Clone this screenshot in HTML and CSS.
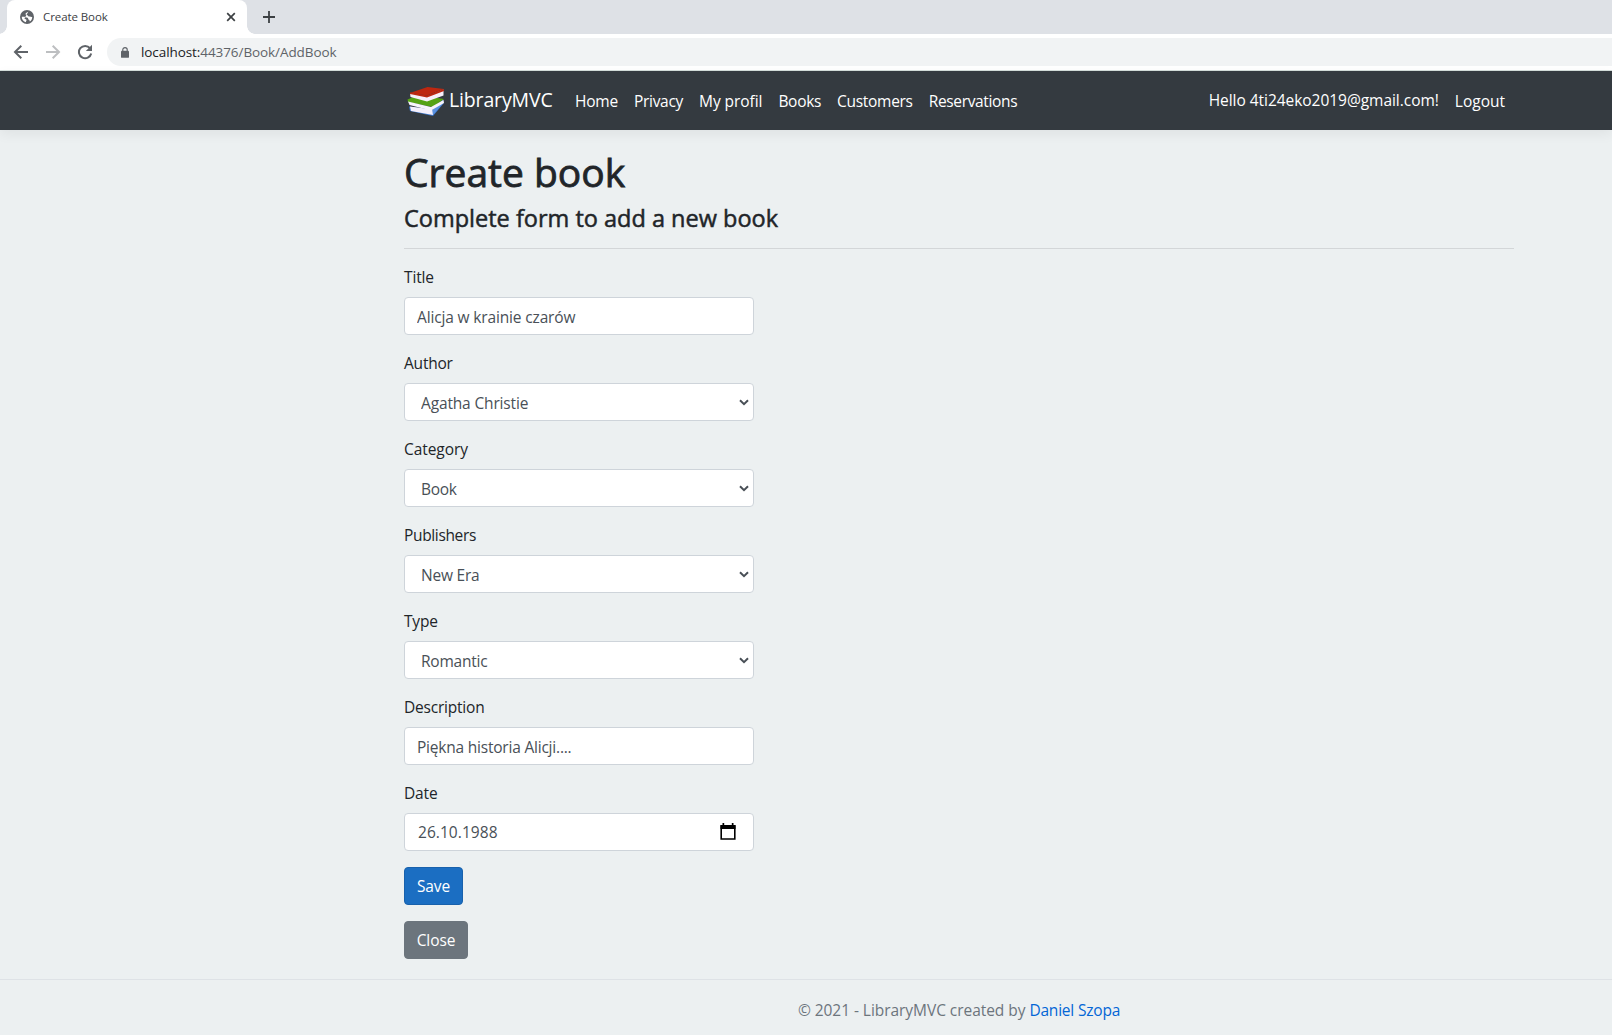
FILE: index.html
```html
<!DOCTYPE html>
<html lang="en">
<head>
<meta charset="utf-8">
<title>Create Book</title>
<link rel="stylesheet" href="styles.css">
</head>
<body>
<header class="browser">
  <div class="tabstrip">
    <div class="tab">
      <svg viewBox="0 0 16 16" width="14" height="14"><circle cx="8" cy="8" r="8" fill="#5f6368"/><path d="M9.500 2C8 3 6.500 3 6.300 4.500c0 1.200 1.200 1.300 2.200 1.300.3 1.400 1.500 1.700 2.700 1.700 1 0 1.500.7 2.800.4-.1 2.300-1.100 4.100-2.700 5.200-.6-.6-.2-1.500-1-1.900-1-.4-1.200-1.200-1-2.200C7.500 8.500 6 8 4.800 7.800 3.800 7.700 3 7.500 2 7.600c-.1 3.200 2 5.600 4.800 6.300.3-.7-.1-1.200.6-1.900.4-.6-.3-1.200-1-1.500l-1.400-.7" fill="#fff"/></svg>
      <span class="tab-title">Create Book</span>
      <svg viewBox="0 0 10 10" width="10" height="10"><path d="M1.200 1.200l7.600 7.600M8.800 1.200L1.200 8.800" stroke="#3c4043" stroke-width="1.700"/></svg>
    </div>
    <svg class="plus" viewBox="0 0 12 12" width="12" height="12"><path d="M6 0v12M0 6h12" stroke="#3c4043" stroke-width="1.800"/></svg>
  </div>
  <div class="toolbar">
    <svg class="nav-icon" viewBox="0 0 16 16" width="16" height="16"><path d="M15 8H2.500M8.300 1.800L2 8l6.300 6.200" fill="none" stroke="#5f6368" stroke-width="2"/></svg>
    <svg class="nav-icon" viewBox="0 0 16 16" width="16" height="16"><path d="M1 8h12.500M7.700 1.800L14 8l-6.300 6.200" fill="none" stroke="#bdbfc1" stroke-width="2"/></svg>
    <svg class="nav-icon" viewBox="0 0 16 16" width="16" height="16"><path d="M13 4.200A6.200 6.200 0 1 0 14.200 9.500" fill="none" stroke="#5f6368" stroke-width="2"/><path d="M15 .8v6.200H8.800z" fill="#5f6368"/></svg>
    <div class="omnibox">
      <svg viewBox="0 0 9 12" width="8" height="11"><rect y="4" width="9" height="8" rx="1" fill="#5f6368"/><path d="M2 5V3a2.500 2.500 0 0 1 5 0v2" fill="none" stroke="#5f6368" stroke-width="1.300"/></svg>
      <span class="url"><span class="host">localhost:</span>44376/Book/AddBook</span>
    </div>
  </div>
</header>
<div class="page">
  <nav class="navbar">
    <div class="container">
      <a class="brand"><svg class="logo" viewBox="0 0 38 32" width="38" height="32">
        <path d="M2 20.500L27 24l9-11 .500 4.500L26 30 3 25z" fill="#3c78d0"/><path d="M3 20.500l22.500 3 .5 5.500L4 25z" fill="#f4effb"/><path d="M25.500 23.500l10-8v2.500L26 29z" fill="#5a91e0"/>
        <path d="M.5 13.500L11 9l26 4-11.500 8L1 16z" fill="#56a315"/><path d="M1 15.500l23 5.500 12.500-7 .5 3L24 24.500 2.500 19z" fill="#f7f4fb"/>
        <path d="M3 7L20.500 1 37 3 20 9.500z" fill="#bd2710"/><path d="M3 7l16.500 3.500L36.500 3.500v6L20 15.500 3.500 11z" fill="#f7effa"/><path d="M3 6.500L20 9.500 37 3v2L20 11.500 3 8z" fill="#bd2710"/></svg><span class="brand-name">LibraryMVC</span></a>
      <div class="links">
        <a class="s20">Home</a><a class="s30">Privacy</a><a class="s05">My profil</a><a class="s30">Books</a><a class="s30">Customers</a><a class="s35">Reservations</a>
      </div>
      <div class="account"><a class="hello">Hello 4ti24eko2019@gmail.com!</a><a class="logout">Logout</a></div>
    </div>
  </nav>
  <main class="container content">
    <h1>Create book</h1>
    <h4>Complete form to add a new book</h4>
    <hr>
    <form>
      <div class="group"><label class="s15" for="title">Title</label><input id="title" class="control s15" value="Alicja w krainie czarów"></div>
      <div class="group"><label class="s20" for="author">Author</label><select id="author" class="control s15"><option>Agatha Christie</option></select></div>
      <div class="group"><label class="s05" for="category">Category</label><select id="category" class="control s30"><option>Book</option></select></div>
      <div class="group"><label class="s35" for="publishers">Publishers</label><select id="publishers" class="control s20"><option>New Era</option></select></div>
      <div class="group"><label class="s20" for="type">Type</label><select id="type" class="control s20"><option>Romantic</option></select></div>
      <div class="group"><label class="s20" for="description">Description</label><input id="description" class="control s20" value="Piękna historia Alicji...."></div>
      <div class="group"><label class="s15">Date</label><div class="control date"><span>26.10.1988</span><svg viewBox="0 0 16 18" width="16" height="18"><path d="M1.200 3h13.600v13H1.200z" fill="none" stroke="#000" stroke-width="1.600"/><path d="M.5 2h15v4H.5zM2.500 0h1.700v3H2.500zM11.800 0h1.700v3h-1.700z"/></svg></div></div>
      <div class="group"><button type="button" class="btn save">Save</button></div>
      <div class="group"><button type="button" class="btn close">Close</button></div>
    </form>
  </main>
  <footer class="footer">© 2021 - LibraryMVC created by <a>Daniel Szopa</a></footer>
</div>
</body>
</html>
```
FILE: styles.css
```css
* { box-sizing: border-box; }
body { margin: 0; height: 1035px; overflow: hidden; background: #ecf0f1; color: #212529; font: 15.5px/24px "Open Sans", "Noto Sans", sans-serif; }
svg { display: block; flex: none; }

/* letter spacing steps */
.s05 { letter-spacing: -.06px; }
.s15 { letter-spacing: -.15px; }
.s20 { letter-spacing: -.21px; }
.s30 { letter-spacing: -.3px; }
.s35 { letter-spacing: -.35px; }

/* browser chrome */
.browser { height: 71px; background: #fff; border-bottom: 1px solid #d5dedb; }
.tabstrip { display: flex; align-items: center; height: 34px; background: #dee1e6; padding-left: 7px; }
.tab { position: relative; display: flex; align-items: center; width: 240px; height: 34px; padding: 0 11px 0 13px; border-radius: 8px 8px 0 0; background: #fff; font-size: 11.5px; color: #3c4043; }
.tab::before, .tab::after { content: ""; position: absolute; bottom: 0; width: 8px; height: 8px; }
.tab::before { left: -8px; background: radial-gradient(circle at 0 0, transparent 7.5px, #fff 8px); }
.tab::after { right: -8px; background: radial-gradient(circle at 100% 0, transparent 7.5px, #fff 8px); }
.tab-title { flex: 1; margin-left: 9px; letter-spacing: -.08px; }
.plus { margin-left: 16px; }
.toolbar { display: flex; align-items: center; height: 36px; padding-left: 13px; }
.nav-icon { margin-right: 16px; }
.omnibox { display: flex; align-items: center; flex: 1; height: 28px; margin-left: -2px; padding-left: 14px; border-radius: 14px 0 0 14px; background: #f1f3f4; font-size: 13.5px; color: #5f6368; }
.url { margin-left: 12px; letter-spacing: -.08px; }
.host { color: #202124; }

/* navbar */
.container { width: 1110px; margin-left: 404px; }
.navbar { height: 59px; background: #343a40; color: #fff; box-shadow: 0 4px 12px rgba(0,0,0,.06); }
.navbar .container { display: flex; align-items: center; height: 59px; }
.brand { display: flex; align-items: center; padding-left: 3px; }
.logo { margin-top: 3px; }
.brand-name { margin-left: 4px; padding-bottom: 1px; font-size: 19.5px; letter-spacing: -.15px; }
.links, .account { display: flex; gap: 16px; }
.links { margin-left: 22.5px; padding-top: 1px; }
.account { margin-left: auto; padding-right: 9px; }
.hello { letter-spacing: -.04px; }
.logout { padding-top: 1px; }

/* form */
.content { padding-top: 17px; height: 849px; }
h1, h4 { margin: 0 0 8px; font-weight: 400; line-height: 1.2; -webkit-text-stroke: .5px #212529; }
h1 { height: 48px; padding-top: 2px; font-size: 39px; -webkit-text-stroke-width: .8px; }
h4 { height: 29px; padding-top: 1px; font-size: 23.5px; }
hr { margin: 16px 0; border: 0; border-top: 1px solid #d3d6d8; }
.group { width: 350px; margin-bottom: 16px; }
label { display: block; margin-bottom: 8px; }
.control { display: block; width: 350px; height: 38px; padding: 7px 12px 5px; border: 1px solid #ced4da; border-radius: 4px; background: #fff; color: #495057; font: inherit; }
select.control { appearance: none; padding-left: 16px; background: #fff url("data:image/svg+xml,%3Csvg xmlns='http://www.w3.org/2000/svg' width='10' height='7'%3E%3Cpath d='M1 1.200l4 4 4-4' fill='none' stroke='%23495057' stroke-width='2'/%3E%3C/svg%3E") no-repeat right 4px top 15px; }
.date { display: flex; align-items: center; justify-content: space-between; padding: 6px 17px 6px 13px; letter-spacing: .05px; }
.btn { display: block; height: 38px; padding: 6px 0; border: 1px solid #1861ac; border-radius: 4px; background: #1b6ec2; color: #fff; font: inherit; text-align: center; letter-spacing: -.1px; }
.save { width: 59px; }
.close { width: 64px; background: #6c757d; border-color: #6c757d; }

.footer { padding-left: 306px; border-top: 1px solid #dee2e6; line-height: 60px; text-align: center; color: #6c757d; letter-spacing: -.05px; }
.footer a { color: #0366d6; letter-spacing: -.2px; }
```
